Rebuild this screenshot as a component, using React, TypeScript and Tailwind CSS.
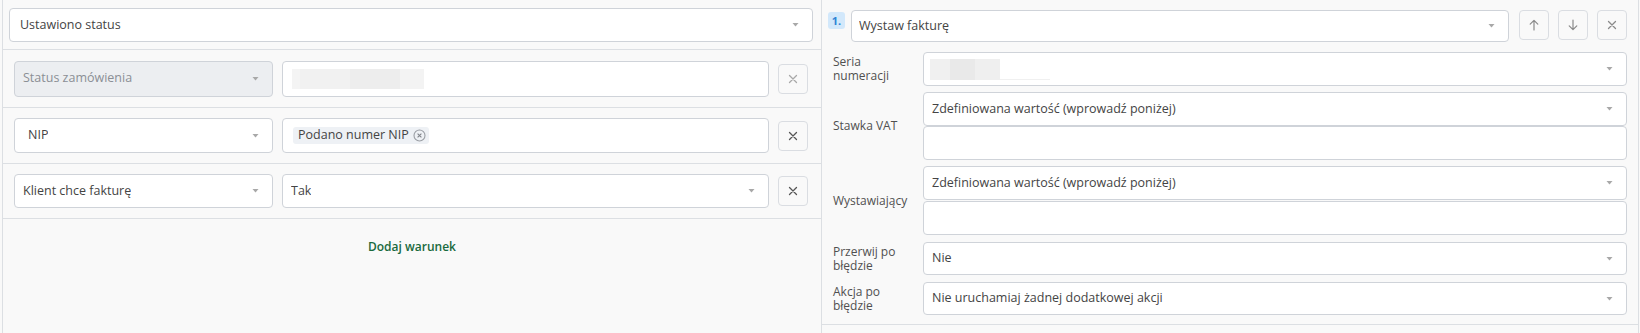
import React from "react";

const Caret = () => (
  <svg width="7" height="4" viewBox="0 0 7 4" className="shrink-0">
    <path d="M0.5 0 L6.5 0 L3.5 3.5 Z" fill="#a8a8a8" />
  </svg>
);

const XIcon = ({ color }: { color: string }) => (
  <svg width="10" height="10" viewBox="0 0 10 10">
    <path d="M1.5 1.5 L8.5 8.5 M8.5 1.5 L1.5 8.5" stroke={color} strokeWidth="1.3" strokeLinecap="round" />
  </svg>
);

const ArrowUp = () => (
  <svg width="10" height="12" viewBox="0 0 10 12">
    <path d="M5 11 V1.5 M1.2 5.2 L5 1.4 L8.8 5.2" stroke="#8a8a8a" strokeWidth="1.2" fill="none" strokeLinecap="round" strokeLinejoin="round" />
  </svg>
);

const ArrowDown = () => (
  <svg width="10" height="12" viewBox="0 0 10 12">
    <path d="M5 1 V10.5 M1.2 6.8 L5 10.6 L8.8 6.8" stroke="#8a8a8a" strokeWidth="1.2" fill="none" strokeLinecap="round" strokeLinejoin="round" />
  </svg>
);

function Select({
  text,
  className = "",
  disabled = false,
  textPad = "pl-[8px]",
}: {
  text?: string;
  className?: string;
  disabled?: boolean;
  textPad?: string;
}) {
  return (
    <div
      className={`flex items-center justify-between border border-[#cfd3d9] rounded-[4px] pr-[13px] ${textPad} ${
        disabled ? "bg-[#eceef1] text-[#8b8f95]" : "bg-white text-[#444]"
      } ${className}`}
    >
      <span className="truncate">{text}</span>
      <Caret />
    </div>
  );
}

function IconBtn({ children }: { children: React.ReactNode }) {
  return (
    <div className="w-[30px] h-[30px] shrink-0 flex items-center justify-center border border-[#dadde2] rounded-[4px] bg-[#f9f9f9]">
      {children}
    </div>
  );
}

function Label({ children }: { children: React.ReactNode }) {
  return (
    <div className="w-[80px] shrink-0 text-[12px] leading-[14px] text-[#505050]">{children}</div>
  );
}

export default function App() {
  return (
    <div
      className="flex w-[1640px] h-[333px] bg-[#f9f9f9] text-[12.5px] text-[#444] overflow-hidden"
      style={{ fontFamily: "'Open Sans', 'Noto Sans', sans-serif" }}
    >
      <div className="w-[2px] shrink-0" />
      {/* Left panel */}
      <div className="w-[819px] shrink-0 border-l border-[#dcdfe3] flex flex-col">
        <div className="h-[50px] border-b border-[#dcdfe3] pl-[6px] pr-[8px] pt-[8px]">
          <Select text="Ustawiono status" className="h-[34px]" textPad="pl-[10px]" />
        </div>

        <div className="h-[58px] border-b border-[#dcdfe3] flex items-center pl-[11px] pr-[13px] gap-[9px]">
          <Select text="Status zamówienia" disabled className="w-[259px] h-[36px] shrink-0" />
          <div className="flex-1 h-[36px] bg-white border border-[#cfd3d9] rounded-[4px] flex items-center pl-[9px]">
            <div className="h-[20px] w-[8px] bg-[#f4f4f4]" />
            <div className="h-[20px] w-[50px] bg-[#f1f1f1]" />
            <div className="h-[20px] w-[50px] bg-[#ededed]" />
            <div className="h-[20px] w-[24px] bg-[#f3f3f3]" />
          </div>
          <IconBtn>
            <XIcon color="#a8a8a8" />
          </IconBtn>
        </div>

        <div className="h-[56px] border-b border-[#dcdfe3] flex items-center pl-[11px] pr-[13px] gap-[9px]">
          <Select text="NIP" className="w-[259px] h-[35px] shrink-0" textPad="pl-[13px]" />
          <div className="flex-1 h-[35px] bg-white border border-[#cfd3d9] rounded-[4px] flex items-center pl-[10px]">
            <div className="h-[17px] flex items-center gap-[4px] bg-[#eef1f5] rounded-[3px] pl-[5px] pr-[3px] text-[12.5px] text-[#444]">
              <span>Podano numer NIP</span>
              <svg width="13" height="13" viewBox="0 0 13 13">
                <circle cx="6.5" cy="6.5" r="5.5" stroke="#9a9ea4" strokeWidth="1.1" fill="none" />
                <path d="M4.6 4.6 L8.4 8.4 M8.4 4.6 L4.6 8.4" stroke="#80848a" strokeWidth="1.1" />
              </svg>
            </div>
          </div>
          <IconBtn>
            <XIcon color="#555" />
          </IconBtn>
        </div>

        <div className="h-[55px] border-b border-[#dcdfe3] flex items-center pl-[11px] pr-[13px] gap-[9px]">
          <Select text="Klient chce fakturę" className="w-[259px] h-[34px] shrink-0" />
          <Select text="Tak" className="flex-1 h-[34px]" />
          <IconBtn>
            <XIcon color="#555" />
          </IconBtn>
        </div>

        <div className="pt-[20px] flex justify-center">
          <span className="text-[12px] leading-[16px] font-semibold text-[#1a6a3e]">Dodaj warunek</span>
        </div>
      </div>

      {/* Right panel */}
      <div className="w-[818px] shrink-0 border-l border-r border-[#dcdfe3] flex flex-col">
        <div className="border-b border-[#dcdfe3] pt-[10px] pb-[9px]">
          <div className="flex items-start pl-[6px] pr-[11px]">
            <div className="w-[17px] h-[17px] mt-[2px] rounded-[3px] bg-[#d2e8fb] text-[#2f84d4] font-bold text-[11px] leading-[17px] text-center shrink-0">
              1.
            </div>
            <Select text="Wystaw fakturę" className="flex-1 h-[32px] ml-[6px]" textPad="pl-[7px]" />
            <div className="flex gap-[9px] ml-[10px]">
              <IconBtn>
                <ArrowUp />
              </IconBtn>
              <IconBtn>
                <ArrowDown />
              </IconBtn>
              <IconBtn>
                <XIcon color="#8a8a8a" />
              </IconBtn>
            </div>
          </div>

          <div className="flex flex-col pl-[11px] pr-[11px] mt-[10px]">
            <div className="flex items-center gap-[10px]">
              <Label>
                Seria
                <br />
                numeracji
              </Label>
              <div className="flex-1 h-[34px] bg-white border border-[#cfd3d9] rounded-[4px] flex items-center justify-between pl-[6px] pr-[13px]">
                <div className="flex items-end h-[21px]">
                  <div className="h-[21px] w-[20px] bg-[#f0f0f0]" />
                  <div className="h-[21px] w-[25px] bg-[#e9e9e9]" />
                  <div className="h-[21px] w-[25px] bg-[#efefef]" />
                  <div className="h-[1px] w-[50px] bg-[#f0f0f0]" />
                </div>
                <Caret />
              </div>
            </div>

            <div className="flex items-center gap-[10px] mt-[6px]">
              <Label>Stawka VAT</Label>
              <div className="flex-1 flex flex-col">
                <Select text="Zdefiniowana wartość (wprowadź poniżej)" className="h-[34px]" />
                <div className="h-[34px] bg-white border border-[#cfd3d9] rounded-[4px]" />
              </div>
            </div>

            <div className="flex items-center gap-[10px] mt-[6px]">
              <Label>Wystawiający</Label>
              <div className="flex-1 flex flex-col">
                <Select text="Zdefiniowana wartość (wprowadź poniżej)" className="h-[34px]" />
                <div className="h-[34px] bg-white border border-[#cfd3d9] rounded-[4px] mt-[1px]" />
              </div>
            </div>

            <div className="flex items-center gap-[10px] mt-[7px]">
              <Label>
                Przerwij po
                <br />
                błędzie
              </Label>
              <Select text="Nie" className="flex-1 h-[33px]" />
            </div>

            <div className="flex items-center gap-[10px] mt-[7px]">
              <Label>
                Akcja po
                <br />
                błędzie
              </Label>
              <Select text="Nie uruchamiaj żadnej dodatkowej akcji" className="flex-1 h-[33px]" />
            </div>
          </div>
        </div>
      </div>
    </div>
  );
}
